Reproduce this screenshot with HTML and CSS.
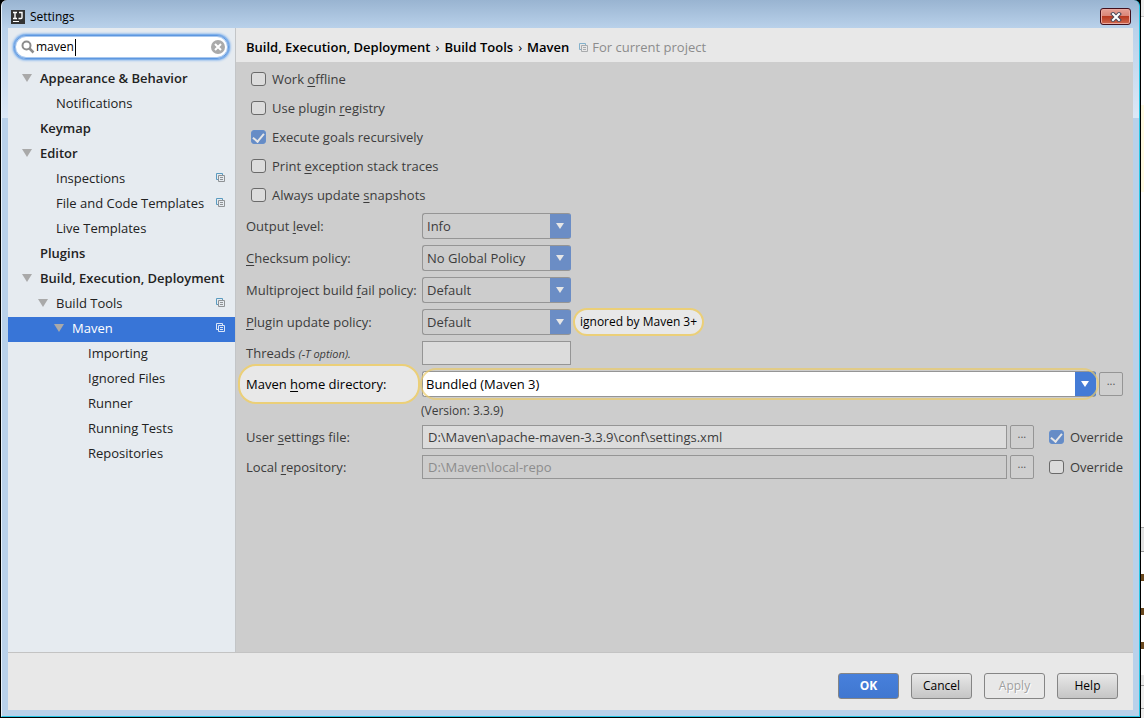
FILE: index.html
```
<!DOCTYPE html>
<html lang="en">
<head>
  <meta charset="UTF-8">
  <meta name="viewport" content="width=device-width, initial-scale=1.0">
  <title>Settings</title>
  <link rel="stylesheet" href="styles.css">
</head>
<body>
  <svg class="defs" width="0" height="0" aria-hidden="true">
    <symbol id="copy" viewBox="0 0 9 9">
      <path class="back" d="M2 6.5H.5v-6h6V2" fill="none"/>
      <path d="M2.5 2.5h6v6h-6zM4 4.5h3M4 6.5h3" fill="none" stroke="currentColor"/>
    </symbol>
  </svg>

  <div class="window">
    <header class="titlebar">
      <svg class="logo" width="14" height="14" viewBox="0 0 14 14" aria-hidden="true">
        <rect width="14" height="14" fill="#333"/>
        <path d="M2 2.5h4M4 2.5v6M2 8.5h4M8 2.5h3v5q0 1-1 1H7.5" fill="none" stroke="#fff" stroke-width="1.4"/>
        <path d="M2 11.500h6" stroke="#fff"/>
      </svg>
      <span class="title">Settings</span>
      <button class="close" aria-label="Close">
        <svg width="12" height="10" viewBox="0 0 12 10">
          <path d="M3 2l6 6M9 2l-6 6" stroke="#4c4858" stroke-width="4" stroke-linecap="square"/>
          <path d="M3 2l6 6M9 2l-6 6" stroke="#fff" stroke-width="2" stroke-linecap="square"/>
        </svg>
      </button>
    </header>

    <div class="content">
      <nav class="sidebar">
        <div class="search">
          <svg width="14" height="14" viewBox="0 0 14 14" aria-hidden="true">
            <circle cx="5.5" cy="5.5" r="4" fill="none" stroke="#8c8c8c" stroke-width="2"/>
            <path d="M8.5 8.5l4 4" stroke="#8c8c8c" stroke-width="2.5"/>
          </svg>
          <span class="query">
            <input type="text" value="maven" aria-label="Search settings">
            <i class="caret"></i>
          </span>
          <button class="clear" aria-label="Clear">
            <svg width="14" height="14" viewBox="0 0 14 14">
              <circle cx="7" cy="7" r="7" fill="#aaa"/>
              <path d="M4 4l6 6M10 4l-6 6" stroke="#fff" stroke-width="2"/>
            </svg>
          </button>
        </div>
        <ul class="tree">
          <li class="group open">Appearance &amp; Behavior</li>
          <li class="level1">Notifications</li>
          <li class="group">Keymap</li>
          <li class="group open">Editor</li>
          <li class="level1">Inspections<svg class="copy"><use href="#copy"/></svg></li>
          <li class="level1">File and Code Templates<svg class="copy"><use href="#copy"/></svg></li>
          <li class="level1">Live Templates</li>
          <li class="group">Plugins</li>
          <li class="group open">Build, Execution, Deployment</li>
          <li class="level1 open">Build Tools<svg class="copy"><use href="#copy"/></svg></li>
          <li class="level2 open selected">Maven<svg class="copy"><use href="#copy"/></svg></li>
          <li class="level3">Importing</li>
          <li class="level3">Ignored Files</li>
          <li class="level3">Runner</li>
          <li class="level3">Running Tests</li>
          <li class="level3">Repositories</li>
        </ul>
      </nav>

      <main class="pane">
        <div class="breadcrumb">
          <b>Build, Execution, Deployment</b><span class="sep">›</span><b>Build Tools</b><span class="sep">›</span><b>Maven</b>
          <span class="scope"><svg class="copy"><use href="#copy"/></svg>For current project</span>
        </div>

        <form class="form">
          <div class="checks">
            <label><input type="checkbox"><span>Work <u>o</u>ffline</span></label>
            <label><input type="checkbox"><span>Use plugin <u>r</u>egistry</span></label>
            <label><input type="checkbox" checked><span>Execute <u>g</u>oals recursively</span></label>
            <label><input type="checkbox"><span>Print <u>e</u>xception stack traces</span></label>
            <label><input type="checkbox"><span>Always update <u>s</u>napshots</span></label>
          </div>

          <div class="row">
            <label class="name" for="output">Output <u>l</u>evel:</label>
            <div class="combo"><select id="output"><option>Info</option></select></div>
          </div>
          <div class="row">
            <label class="name" for="checksum"><u>C</u>hecksum policy:</label>
            <div class="combo"><select id="checksum"><option>No Global Policy</option></select></div>
          </div>
          <div class="row">
            <label class="name" for="fail">Multiproject build <u>f</u>ail policy:</label>
            <div class="combo"><select id="fail"><option>Default</option></select></div>
          </div>
          <div class="row">
            <label class="name" for="update"><u>P</u>lugin update policy:</label>
            <div class="combo"><select id="update"><option>Default</option></select></div>
            <span class="hint">ignored by Maven 3+</span>
          </div>
          <div class="row short">
            <label class="name" for="threads">Threads <em>(-T option).</em></label>
            <input class="field threads" id="threads" type="text">
          </div>
          <div class="row">
            <label class="name found" for="home">Maven <u>h</u>ome directory:</label>
            <div class="combo wide"><select id="home"><option>Bundled (Maven 3)</option></select></div>
            <button type="button" class="browse" aria-label="Browse Maven home">...</button>
          </div>
          <div class="version">(Version: 3.3.9)</div>
          <div class="row short">
            <label class="name" for="settings">User <u>s</u>ettings file:</label>
            <input class="field" id="settings" type="text" value="D:\Maven\apache-maven-3.3.9\conf\settings.xml">
            <button type="button" class="browse" aria-label="Browse settings file">...</button>
            <label class="override"><input type="checkbox" checked>Override</label>
          </div>
          <div class="row short">
            <label class="name" for="repo">Local <u>r</u>epository:</label>
            <input class="field" id="repo" type="text" value="D:\Maven\local-repo" disabled>
            <button type="button" class="browse" aria-label="Browse repository">...</button>
            <label class="override"><input type="checkbox">Override</label>
          </div>
        </form>
      </main>
    </div>

    <footer class="footer">
      <button class="btn primary">OK</button>
      <button class="btn">Cancel</button>
      <button class="btn" disabled>Apply</button>
      <button class="btn">Help</button>
    </footer>
  </div>
  <div class="desktop"></div>
</body>
</html>
```

FILE: styles.css
```
* {
  box-sizing: border-box;
}
body {
  margin: 0;
  height: 100vh;
  display: flex;
  overflow: hidden;
  background: #000;
  font-family: "Open Sans", "Noto Sans", sans-serif;
  font-size: 13px;
  line-height: 20px;
  color: #222;
}
button, input, select {
  font: inherit;
  color: inherit;
  margin: 0;
}
b {
  font-weight: 600;
}
.defs {
  position: absolute;
}

/* window frame */
.window {
  flex: 1;
  display: flex;
  flex-direction: column;
  margin: 0 1px 1px;
  padding: 0 6px 6px 6px;
  border: 1px solid #25c5e4;
  border-top: none;
  border-left-color: #e8f2fb;
  border-radius: 6px 6px 0 0;
  background: linear-gradient(#99b4d1, #b9d1ea 28px, #dce8f6 118px, #b9d1ea 118px);
}
.titlebar {
  display: flex;
  align-items: center;
  height: 28px;
  padding: 5px 2px 0 3px;
}
.title {
  flex: 1;
  padding-left: 5px;
  font-size: 12px;
  color: #000;
}
.close {
  display: flex;
  align-items: center;
  justify-content: center;
  width: 31px;
  height: 17px;
  padding: 0;
  border: 1px solid #43101c;
  border-radius: 3px;
  box-shadow: inset 0 0 0 1px #eba99f;
  background: linear-gradient(#e6a196, #d98375 50%, #b83a21 50%, #d0694f);
}
.content {
  flex: 1;
  display: flex;
  min-height: 0;
}

/* tree */
.sidebar {
  width: 228px;
  background: #e6ebf0;
  border-right: 1px solid #c3c5c7;
}
.search {
  display: flex;
  align-items: center;
  height: 24px;
  margin: 7px 6px 8px;
  padding: 0 3px 0 6px;
  border: 1px solid #5e97df;
  border-radius: 12px;
  box-shadow: 0 0 0 1px #7fb0ea, 0 0 2px 2px #a4c6ee, inset 0 0 0 1px #a9c9f0;
  background: #fff;
}
.query {
  flex: 1;
  display: flex;
  align-items: center;
}
.query input {
  width: 40px;
  padding: 0 0 0 1px;
  border: none;
  outline: none;
  background: none;
  font-size: 12px;
  color: #000;
}
.caret {
  width: 1px;
  height: 17px;
  background: #000;
}
.clear {
  display: flex;
  padding: 0;
  border: none;
  background: none;
}
.tree {
  margin: 0;
  padding: 0;
  list-style: none;
}
.tree li {
  display: flex;
  align-items: center;
  height: 25px;
  padding-right: 10px;
  padding-bottom: 4px;
  white-space: nowrap;
}
.tree .group {
  padding-left: 32px;
  font-weight: 600;
}
.tree .level1 {
  padding-left: 48px;
}
.tree .level2 {
  padding-left: 64px;
}
.tree .level3 {
  padding-left: 80px;
}
.tree .open::before {
  content: "";
  margin: 0 8px 0 -18px;
  border: solid transparent;
  border-width: 8px 5px 0;
  border-top-color: #a9a9a9;
}
.tree .selected {
  background: #3875d7;
  color: #fff;
}
.copy {
  width: 9px;
  height: 9px;
  color: #8f9295;
  stroke: #5a9abf;
}
.tree .copy {
  margin-left: auto;
}
.selected .copy {
  color: #dbe6f8;
  stroke: #dbe6f8;
}

/* settings page */
.pane {
  flex: 1;
  min-width: 0;
  background: #cdcdcd;
  color: #3c3c3c;
}
.breadcrumb {
  display: flex;
  align-items: center;
  height: 34px;
  padding: 4px 10px 0;
  background: #e8e8e8;
  color: #000;
  white-space: nowrap;
}
.sep {
  padding: 0 5px;
}
.scope {
  display: flex;
  align-items: center;
  gap: 4px;
  margin-left: 10px;
  color: #8c8c8c;
}
.scope .copy {
  opacity: 0.7;
}
.form {
  padding: 2px 10px;
}
.checks {
  margin-bottom: 1px;
}
.checks label {
  display: flex;
  align-items: center;
  height: 29px;
  padding-left: 5px;
  gap: 6px;
}
input[type="checkbox"] {
  appearance: none;
  flex: none;
  width: 15px;
  height: 14px;
  border: 1px solid #6a6a6a;
  border-radius: 3px;
  background: #dcdcdc;
}
input[type="checkbox"]:checked {
  display: flex;
  justify-content: center;
  border-color: #668fcb;
  background: #668cc6;
}
input[type="checkbox"]:checked::before {
  content: "";
  width: 5px;
  height: 9px;
  border: solid #e6e6e6;
  border-width: 0 2px 2px 0;
  transform: rotate(40deg);
}
u {
  text-underline-offset: 2px;
}
.row {
  display: flex;
  align-items: center;
  height: 32px;
}
.row.short {
  height: 30px;
}
.name {
  flex: none;
  width: 176px;
  white-space: nowrap;
}
.name em {
  font-size: 11px;
}
.combo {
  position: relative;
  flex: none;
  width: 149px;
}
.combo select {
  appearance: none;
  display: block;
  width: 100%;
  height: 26px;
  padding: 0 24px 0 4px;
  border: 1px solid #959595;
  border-right-color: #6b8dc5;
  border-radius: 3px;
  background: linear-gradient(#6b8dc5, #6b8dc5) right / 21px 100% no-repeat border-box #cdcdcd;
}
.combo::after {
  content: "";
  position: absolute;
  right: 7px;
  top: 10px;
  border: solid transparent;
  border-width: 6px 4px 0;
  border-top-color: #e6e6e6;
  pointer-events: none;
}
.combo.wide {
  flex: 1;
}
.combo.wide select {
  padding-left: 3px;
  border-right-color: #447bd6;
  background: linear-gradient(#447bd6, #447bd6) right / 21px 100% no-repeat border-box #fff;
  color: #000;
}
.combo.wide::after {
  border-top-color: #fff;
}
/* spotlight around the search hits */
.combo.wide::before {
  content: "";
  position: absolute;
  inset: -3px -3px -3px -2px;
  border: 2px solid #eacb6a;
  border-radius: 16px;
  opacity: 0.7;
  pointer-events: none;
}
.hint, .found {
  border: 2px solid #ebcf78;
  background: #e8e8e8;
  color: #000;
}
.hint {
  height: 28px;
  margin-left: 2px;
  padding: 2px 5px;
  border-radius: 14px;
  font-size: 12px;
  white-space: nowrap;
}
.name.found {
  width: 182px;
  height: 40px;
  margin: 0 2px 0 -8px;
  padding: 8px 6px;
  border-radius: 18px;
}
.field {
  flex: 1;
  min-width: 0;
  height: 24px;
  padding: 0 5px;
  border: 1px solid #959595;
  background: #dcdcdc;
}
.field:disabled {
  background: #cdcdcd;
  color: #8c8c8c;
}
.threads {
  flex: none;
  width: 149px;
}
.browse {
  width: 24px;
  height: 24px;
  margin-left: 3px;
  padding: 0 0 6px;
  border: 1px solid #959595;
  border-radius: 2px;
  background: #cfcfcf;
  font-size: 11px;
  line-height: 16px;
  color: #555;
}
.version {
  height: 22px;
  padding-left: 175px;
  font-size: 12px;
  line-height: 22px;
}
.override {
  display: flex;
  align-items: center;
  gap: 6px;
  margin-left: 15px;
}

/* buttons */
.footer {
  display: flex;
  justify-content: flex-end;
  gap: 12px;
  height: 58px;
  padding: 20px 15px 0;
  border-top: 1px solid #c3c3c3;
  background: #e8e8e8;
}
.btn {
  width: 61px;
  height: 26px;
  padding: 0;
  border: 1px solid #858585;
  border-radius: 3px;
  background: linear-gradient(#e8e8e8, #c5c5c5);
  font-size: 12px;
  color: #000;
}
.btn.primary {
  background: linear-gradient(#4780dc, #4077d0);
  color: #fff;
  font-weight: bold;
}
.btn:disabled {
  background: #e8e8e8;
  color: #a0a0a0;
  text-shadow: 1px 1px #fff;
}

/* sliver of the editor behind the dialog */
.desktop {
  width: 3px;
  background: linear-gradient(#f0f0f0 16px, #c8c8c8 16px 17px, #fff 17px 105px, #fffbe4 105px 150px, #fffbe4 150px 192px, #fff 192px 527px, #aaa 527px 528px, #e4e4e4 528px 551px, #999 551px 552px, #fff 552px 574px, #6b4a20 574px 581px, #fff 581px 608px, #6b4a20 608px 615px, #fff 615px 642px, #6b4a20 642px 649px, #fff 649px 675px, #e8e8e8 675px 685px, #999 685px 686px, #eee 686px 708px, #999 708px 709px, #eee 709px);
}
```
